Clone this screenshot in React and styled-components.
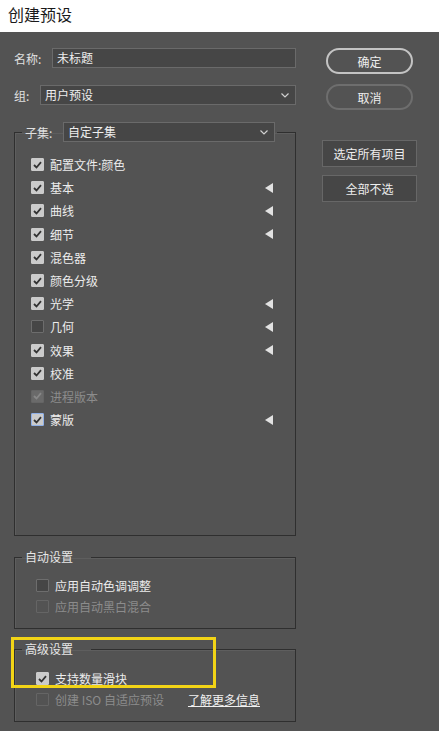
import React from "react";
import styled, { createGlobalStyle } from "styled-components";

const GlobalStyle = createGlobalStyle`
  html, body { margin: 0; padding: 0; background: #535353; }
  body { font-family: "Noto Sans CJK SC", "Noto Sans", sans-serif; font-size: 12px; }
`;

const Window = styled.div`
  width: 439px;
  height: 731px;
  display: flex;
  flex-direction: column;
  position: relative;
  overflow: hidden;
`;

const TitleBar = styled.div`
  height: 32px;
  background: #ffffff;
  color: #1a1a1a;
  font-size: 16px;
  line-height: 28px;
  padding-left: 8px;
  box-sizing: border-box;
`;

const Body = styled.div`
  flex: 1;
  background: #535353;
  display: flex;
  padding-left: 14px;
  color: #e6e6e6;
`;

const LeftCol = styled.div`
  width: 282px;
  display: flex;
  flex-direction: column;
  padding-top: 16px;
`;

const RightCol = styled.div`
  width: 95px;
  margin-left: 26px;
  display: flex;
  flex-direction: column;
  align-items: center;
  padding-top: 16px;
`;

const FieldRow = styled.div`
  display: flex;
  align-items: center;
  height: 20px;
  margin-bottom: 17px;
`;

const Label = styled.span`
  width: ${(p) => p.w}px;
  flex: none;
  color: #e0e0e0;
  white-space: nowrap;
`;

const TextInput = styled.div`
  flex: 1;
  height: 20px;
  box-sizing: border-box;
  background: #464646;
  border: 1px solid #6a6a6a;
  padding-left: 4px;
  line-height: 18px;
  color: #eeeeee;
`;

const Select = styled.div`
  flex: 1;
  height: 20px;
  box-sizing: border-box;
  background: #464646;
  border: 1px solid #6a6a6a;
  padding: 0 6px 0 4px;
  line-height: 18px;
  color: #eeeeee;
  display: flex;
  align-items: center;
  justify-content: space-between;
  white-space: nowrap;
`;

const Chevron = () => (
  <svg width="8" height="5" viewBox="0 0 8 5">
    <path d="M0.5 0.5 L4 4 L7.5 0.5" stroke="#d0d0d0" strokeWidth="1.2" fill="none" />
  </svg>
);

const Group = styled.fieldset`
  margin: 0;
  padding: ${(p) => p.pad};
  border: 1px solid #2f2f2f;
  box-shadow: 1px 1px 0 #5e5e5e inset;
  min-width: 0;
  box-sizing: border-box;
  height: ${(p) => p.h}px;
  margin-top: ${(p) => p.mt}px;
`;

const Legend = styled.legend`
  margin-left: 7px;
  padding: 0 ${(p) => p.pr}px 0 3px;
  line-height: 16px;
  color: #e6e6e6;
  white-space: nowrap;
`;

const SubsetLegend = styled.legend`
  margin-left: 7px;
  padding: 0 2px 0 3px;
  height: 20px;
  display: flex;
  align-items: center;
  white-space: nowrap;
  color: #e6e6e6;
`;

const SubsetSelect = styled(Select)`
  flex: none;
  width: 212px;
`;

const CheckRow = styled.div`
  display: flex;
  align-items: center;
  height: ${(p) => p.h}px;
  padding-left: ${(p) => p.pl}px;
  padding-right: 22px;
  color: ${(p) => (p.disabled ? "#8c8c8c" : "#ececec")};
  white-space: nowrap;
`;

const Box = styled.span`
  width: 13px;
  height: 13px;
  box-sizing: border-box;
  display: inline-flex;
  align-items: center;
  justify-content: center;
  margin-right: 6px;
  border-radius: 1px;
  flex: none;
  background: ${(p) =>
    p.disabled ? (p.checked ? "#6a6a6a" : "transparent") : p.checked ? "#cbcbcb" : "#464646"};
  border: 1px solid
    ${(p) => (p.focus ? "#8fb0e8" : p.disabled ? "#656565" : p.checked ? "#cbcbcb" : "#6d6d6d")};
`;

const RowText = styled.span`
  flex: 1;
`;

const Triangle = styled.span`
  width: 0;
  height: 0;
  border-top: 5px solid transparent;
  border-bottom: 5px solid transparent;
  border-right: 8px solid #e2e2e2;
`;

const Check = ({ color }) => (
  <svg width="9" height="8" viewBox="0 0 9 8">
    <path d="M1 4 L3.5 6.5 L8 1.2" stroke={color} strokeWidth="1.8" fill="none" />
  </svg>
);

const CheckItem = ({ label, checked, disabled, arrow, focus, h = 23.2, pl = 16 }) => (
  <CheckRow h={h} pl={pl} disabled={disabled}>
    <Box checked={checked} disabled={disabled} focus={focus}>
      {checked && <Check color={disabled ? "#888" : "#333"} />}
    </Box>
    <RowText>{label}</RowText>
    {arrow && <Triangle />}
  </CheckRow>
);

const SubsetRows = styled.div`
  padding-top: 11px;
`;

const Pill = styled.div`
  width: 87px;
  height: 26px;
  box-sizing: border-box;
  border-radius: 13px;
  border: 2px solid ${(p) => (p.primary ? "#c4c4c4" : "#6e6e6e")};
  display: flex;
  align-items: center;
  justify-content: center;
  color: #eeeeee;
  margin-bottom: 10px;
`;

const RectButton = styled.div`
  width: 95px;
  height: 27px;
  box-sizing: border-box;
  background: #464646;
  border: 1px solid #676767;
  display: flex;
  align-items: center;
  justify-content: center;
  color: #eeeeee;
  margin-top: ${(p) => p.mt}px;
`;

const LinkText = styled.span`
  color: #f0f0f0;
  text-decoration: underline;
  margin-left: auto;
  margin-right: 13px;
`;

const Highlight = styled.div`
  position: absolute;
  left: 11px;
  top: 637px;
  width: 205px;
  height: 51px;
  box-sizing: border-box;
  border: 3px solid #f2d416;
  pointer-events: none;
`;

const subset = [
  { label: "配置文件:颜色", checked: true },
  { label: "基本", checked: true, arrow: true },
  { label: "曲线", checked: true, arrow: true },
  { label: "细节", checked: true, arrow: true },
  { label: "混色器", checked: true },
  { label: "颜色分级", checked: true },
  { label: "光学", checked: true, arrow: true },
  { label: "几何", checked: false, arrow: true },
  { label: "效果", checked: true, arrow: true },
  { label: "校准", checked: true },
  { label: "进程版本", checked: true, disabled: true },
  { label: "蒙版", checked: true, arrow: true, focus: true },
];

export default function App() {
  return (
    <Window>
      <GlobalStyle />
      <TitleBar>创建预设</TitleBar>
      <Body>
        <LeftCol>
          <FieldRow>
            <Label w={38}>名称:</Label>
            <TextInput>未标题</TextInput>
          </FieldRow>
          <FieldRow>
            <Label w={26}>组:</Label>
            <Select>
              用户预设
              <Chevron />
            </Select>
          </FieldRow>
          <Group h={414} mt={0} pad="0">
            <SubsetLegend>
              <Label w={38}>子集:</Label>
              <SubsetSelect>
                自定子集
                <Chevron />
              </SubsetSelect>
            </SubsetLegend>
            <SubsetRows>
              {subset.map((s) => (
                <CheckItem key={s.label} {...s} />
              ))}
            </SubsetRows>
          </Group>
          <Group h={80} mt={13} pad="10px 0 0 0">
            <Legend pr={18}>自动设置</Legend>
            <CheckItem label="应用自动色调调整" h={21} pl={21} />
            <CheckItem label="应用自动黑白混合" h={21} pl={21} disabled />
          </Group>
          <Group h={81} mt={12} pad="11px 0 0 0">
            <Legend pr={18}>高级设置</Legend>
            <CheckItem label="支持数量滑块" checked h={21} pl={21} />
            <CheckRow h={21} pl={21} disabled>
              <Box disabled />
              <span>创建 ISO 自适应预设</span>
              <LinkText>了解更多信息</LinkText>
            </CheckRow>
          </Group>
        </LeftCol>
        <RightCol>
          <Pill primary>确定</Pill>
          <Pill>取消</Pill>
          <RectButton mt={20}>选定所有项目</RectButton>
          <RectButton mt={8}>全部不选</RectButton>
        </RightCol>
      </Body>
      <Highlight />
    </Window>
  );
}
